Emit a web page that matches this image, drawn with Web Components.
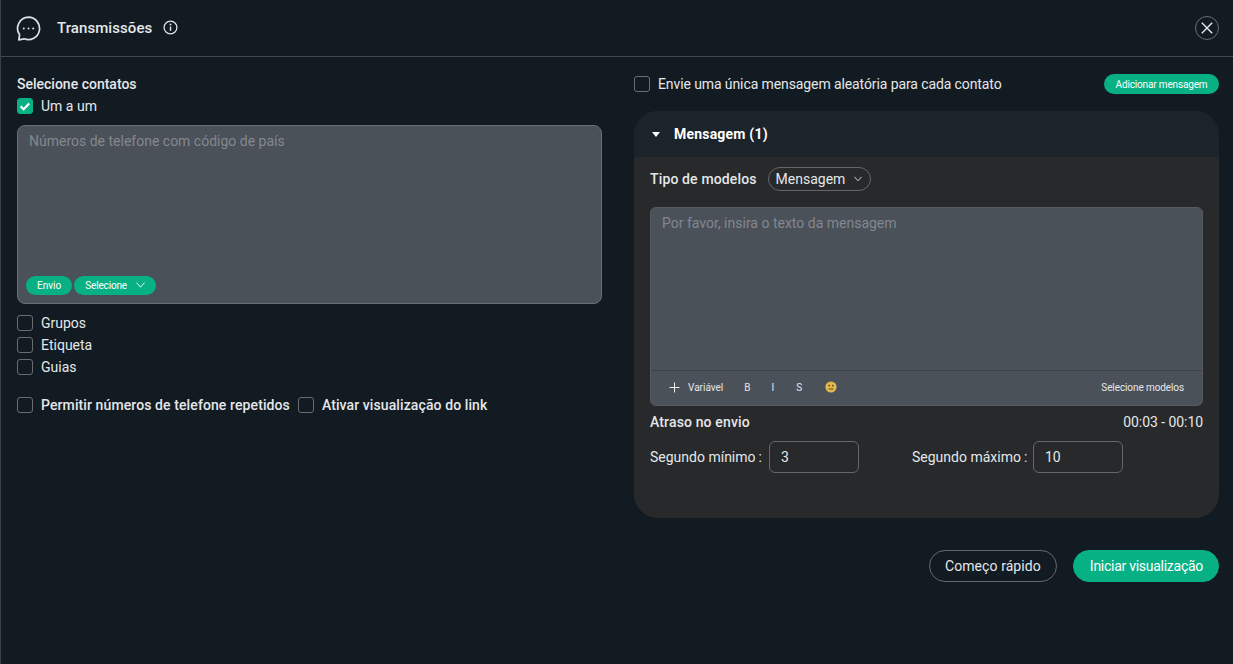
<!DOCTYPE html>
<html lang="pt">
<head>
<meta charset="utf-8">
<title>Transmissões</title>
<style>
    html, body { margin: 0; height: 100%; background: #131b22; }
    body { font-family: Roboto, "Liberation Sans", sans-serif; color: #e8eaed; overflow: hidden; }
</style>
</head>
<body>
<broadcast-page>
    <page-header title="Transmissões"></page-header>
    <div slot="left">
        <section-title>Selecione contatos</section-title>
        <check-box checked>Um a um</check-box>
        <text-box style="height:179px;margin-top:8px;" placeholder="Números de telefone com código de país">
            <div slot="footer" style="display:flex;gap:2px;padding:0 0 8px 8px;">
                <pill-button style="letter-spacing:0;">Envio</pill-button>
                <pill-button caret>Selecione</pill-button>
            </div>
        </text-box>
        <div style="margin-top:8px;display:flex;flex-direction:column;">
            <check-box>Grupos</check-box>
            <check-box>Etiqueta</check-box>
            <check-box>Guias</check-box>
        </div>
        <div style="margin-top:16px;display:flex;gap:8px;">
            <check-box bold>Permitir números de telefone repetidos</check-box>
            <check-box bold>Ativar visualização do link</check-box>
        </div>
    </div>
    <div slot="right">
        <div style="display:flex;justify-content:space-between;align-items:center;height:22px;margin-bottom:16px;">
            <check-box style="letter-spacing:-.1px;">Envie uma única mensagem aleatória para cada contato</check-box>
            <pill-button wide>Adicionar mensagem</pill-button>
        </div>
        <message-card heading="Mensagem (1)"></message-card>
    </div>
    <div slot="actions" style="display:flex;gap:16px;">
        <action-button style="padding:0 15px;letter-spacing:.08px;">Começo rápido</action-button>
        <action-button primary style="padding:0 15px 0 16px;letter-spacing:-.27px;">Iniciar visualização</action-button>
    </div>
</broadcast-page>

<script>
(function() {
    "use strict";

    class BroadcastPage extends HTMLElement {
        constructor() {
            super();
            this.attachShadow({mode: 'open'}).innerHTML = `
                <style>
                    :host { display: block; height: 664px; box-sizing: border-box; border-left: 1px solid #3a4046; }
                    #cols { display: grid; grid-template-columns: 585px 585px; gap: 32px; padding: 16px 0 0 16px; }
                    #actions { display: flex; justify-content: flex-end; margin: 32px 14px 0 0; }
                </style>
                <slot></slot>
                <div id="cols">
                    <div><slot name="left"></slot></div>
                    <div><slot name="right"></slot></div>
                </div>
                <div id="actions"><slot name="actions"></slot></div>
            `;
        }
    }

    class PageHeader extends HTMLElement {
        constructor() {
            super();
            this.attachShadow({mode: 'open'}).innerHTML = `
                <style>
                    :host { display: flex; align-items: center; height: 56px; border-bottom: 1px solid #45474a; padding: 0 14px 0 15px; }
                    h1 { margin: 0 0 0 16px; font-size: 15px; font-weight: 500; letter-spacing: .08px; color: #e4e7ea; line-height: 56px; }
                    .info { margin: 0 0 2px 11px; display: block; }
                    .close { margin-left: auto; display: block; }
                    .chat { display: block; }
                </style>
                <svg class="chat" width="25" height="25" viewBox="0 0 25 25" fill="none" stroke="#dfe2e5" stroke-width="1.7">
                    <path d="M12.5 1.2a11.2 11.2 0 1 1-4.3 21.6l-5.4 1 .8-5A11.2 11.2 0 0 1 12.5 1.2z" stroke-linejoin="round"/>
                    <circle cx="7.8" cy="12.5" r="1" fill="#dfe2e5" stroke="none"/>
                    <circle cx="12.5" cy="12.5" r="1" fill="#dfe2e5" stroke="none"/>
                    <circle cx="17.2" cy="12.5" r="1" fill="#dfe2e5" stroke="none"/>
                </svg>
                <h1>${this.getAttribute('title')}</h1>
                <svg class="info" width="15" height="15" viewBox="0 0 15 15" fill="none" stroke="#e4e7ea" stroke-width="1.2">
                    <circle cx="7.5" cy="7.5" r="6.4"/>
                    <path d="M7.5 6.6v4.2" stroke-width="1.4"/>
                    <circle cx="7.5" cy="4.5" r=".9" fill="#e4e7ea" stroke="none"/>
                </svg>
                <svg class="close" width="24" height="24" viewBox="0 0 24 24" fill="none">
                    <circle cx="12" cy="12" r="11.5" stroke="#6b6e70"/>
                    <path d="M6.8 6.8l10.4 10.4M17.2 6.8L6.8 17.2" stroke="#e6e8ea" stroke-width="1.4"/>
                </svg>
            `;
        }
    }

    class SectionTitle extends HTMLElement {
        constructor() {
            super();
            this.attachShadow({mode: 'open'}).innerHTML = `
                <style>
                    :host { display: block; font-size: 14px; font-weight: 500; line-height: 22px; color: #e4e7ea; }
                </style>
                <slot></slot>
            `;
        }
    }

    class CheckBox extends HTMLElement {
        constructor() {
            super();
            let on = this.hasAttribute('checked');
            this.attachShadow({mode: 'open'}).innerHTML = `
                <style>
                    :host { display: flex; align-items: center; gap: 8px; height: 22px; font-size: 14px; color: #e4e7ea; white-space: nowrap; }
                    :host([bold]) { font-weight: 500; letter-spacing: .1px; }
                    .box { width: 14px; height: 14px; border: 1px solid #6a6d70; border-radius: 3px; display: block; flex: none; }
                    .box.on { background: #07b184; border-color: #07b184; }
                    svg { display: block; }
                </style>
                <span class="box ${on ? 'on' : ''}">
                    ${on ? '<svg width="14" height="14" viewBox="0 0 14 14" fill="none"><path d="M2.6 7.2l3 3L11.2 4.4" stroke="#fff" stroke-width="2.2"/></svg>' : ''}
                </span>
                <span><slot></slot></span>
            `;
        }
    }

    class TextBox extends HTMLElement {
        constructor() {
            super();
            this.attachShadow({mode: 'open'}).innerHTML = `
                <style>
                    :host { display: flex; flex-direction: column; box-sizing: border-box; background: #4a5159; border: 1px solid #6b7076; border-radius: 8px; }
                    #ph { flex: 1; padding: 5px 11px; font-size: 14px; line-height: 20px; color: #83888e; }
                </style>
                <div id="ph">${this.getAttribute('placeholder')}</div>
                <slot name="footer"></slot>
            `;
        }
    }

    class PillButton extends HTMLElement {
        constructor() {
            super();
            let caret = this.hasAttribute('caret');
            this.attachShadow({mode: 'open'}).innerHTML = `
                <style>
                    :host { display: inline-flex; align-items: center; height: 19px; padding: 0 11px; gap: 9px; border-radius: 10px; background: #07b184; color: #fff; font-size: 10px; letter-spacing: -.15px; white-space: nowrap; }
                    :host([wide]) { height: 20px; padding: 0 11.5px; }
                    svg { display: block; margin-bottom: 2px; }
                </style>
                <slot></slot>
                ${caret ? '<svg width="9" height="6" viewBox="0 0 9 6" fill="none"><path d="M.5.6L4.5 5.2 8.5.6" stroke="#e8f8f3"/></svg>' : ''}
            `;
        }
    }

    class MessageCard extends HTMLElement {
        constructor() {
            super();
            this.attachShadow({mode: 'open'}).innerHTML = `
                <style>
                    :host { display: block; height: 407px; border-radius: 24px; overflow: hidden; background: #27292b; }
                    #head { display: flex; align-items: center; height: 46px; background: #1c242b; padding-left: 18px; font-size: 14px; font-weight: 700; letter-spacing: .2px; color: #fff; }
                    #head svg { margin-right: 14px; display: block; }
                    #body { padding: 10px 16px 0; }
                    #type { display: flex; align-items: center; gap: 11px; height: 24px; font-size: 14px; font-weight: 500; color: #e4e7ea; }
                    #type b { font-weight: 500; letter-spacing: .14px; }
                    #select { display: inline-flex; align-items: center; gap: 9px; height: 22px; padding: 0 8px 0 7px; border: 1px solid #65686a; border-radius: 12px; font-weight: 400; }
                    #editor { margin-top: 16px; height: 199px; box-sizing: border-box; background: #4a5159; border: 1px solid #565b61; border-radius: 6px; display: flex; flex-direction: column; }
                    #ph { flex: 1; padding: 5px 11px; font-size: 14px; line-height: 20px; color: #83888e; }
                    #tools { display: flex; align-items: center; height: 35px; box-sizing: border-box; padding: 0 18px 2px; border-top: 1px solid #3f4245; font-size: 10px; color: #e4e7ea; }
                    #tools svg { display: block; }
                    #tools .v { margin: 0 21px 0 8px; }
                    #tools .t { margin-right: 21px; }
                    #tools .s { margin: 0 23px 0 1px; }
                    #tools .end { margin-left: auto; letter-spacing: -.1px; }
                    #delay { display: flex; justify-content: space-between; margin-top: 5px; line-height: 22px; font-size: 14px; color: #e4e7ea; }
                    #delay b { font-weight: 500; letter-spacing: .14px; }
                    #delay span { letter-spacing: -.06px; }
                    #range { display: flex; align-items: center; margin-top: 8px; font-size: 14px; color: #e4e7ea; }
                    .lab { display: inline-block; width: 119px; white-space: nowrap; }
                    .lab i { font-style: normal; margin-left: 3px; }
                    .num { box-sizing: border-box; height: 32px; border: 1px solid #65686a; border-radius: 6px; padding: 0 11px; line-height: 30px; }
                    .a { width: 90px; margin-right: 53px; }
                    .b { width: 90px; margin-left: 2px; }
                </style>
                <div id="head">
                    <svg width="8" height="5" viewBox="0 0 8 5"><path d="M0 0h8L4 5z" fill="#fff"/></svg>
                    ${this.getAttribute('heading')}
                </div>
                <div id="body">
                    <div id="type"><b>Tipo de modelos</b>
                        <span id="select">Mensagem
                            <svg width="8" height="6" viewBox="0 0 8 6" fill="none"><path d="M.4.8L4 4.8 7.6.8" stroke="#c9cccf"/></svg>
                        </span>
                    </div>
                    <div id="editor">
                        <div id="ph">Por favor, insira o texto da mensagem</div>
                        <div id="tools">
                            <svg width="11" height="11" viewBox="0 0 11 11" fill="none"><path d="M5.5.5v10M.5 5.5h10" stroke="#eee"/></svg>
                            <span class="v">Variável</span>
                            <span class="t">B</span>
                            <span class="t">I</span>
                            <span class="s">S</span>
                            <svg width="12" height="12" viewBox="0 0 12 12" fill="none">
                                <circle cx="6" cy="6" r="5.6" fill="#e5b84f"/>
                                <circle cx="4.2" cy="4.6" r=".85" fill="#4a3c1c"/>
                                <circle cx="7.8" cy="4.6" r=".85" fill="#4a3c1c"/>
                                <path d="M3.6 8h4.8" stroke="#4a3c1c" stroke-width=".9"/>
                            </svg>
                            <span class="end">Selecione modelos</span>
                        </div>
                    </div>
                    <div id="delay"><b>Atraso no envio</b><span>00:03 - 00:10</span></div>
                    <div id="range">
                        <span class="lab">Segundo mínimo<i>:</i></span><span class="num a">3</span>
                        <span class="lab">Segundo máximo<i>:</i></span><span class="num b">10</span>
                    </div>
                </div>
            `;
        }
    }

    class ActionButton extends HTMLElement {
        constructor() {
            super();
            this.attachShadow({mode: 'open'}).innerHTML = `
                <style>
                    :host { display: inline-flex; align-items: center; box-sizing: border-box; height: 32px; padding: 0 16px; border-radius: 16px; border: 1px solid #65686a; font-size: 14px; color: #e4e7ea; white-space: nowrap; }
                    :host([primary]) { background: #07b184; border-color: #07b184; color: #fff; }
                </style>
                <slot></slot>
            `;
        }
    }

    window.customElements.define('broadcast-page', BroadcastPage);
    window.customElements.define('page-header', PageHeader);
    window.customElements.define('section-title', SectionTitle);
    window.customElements.define('check-box', CheckBox);
    window.customElements.define('text-box', TextBox);
    window.customElements.define('pill-button', PillButton);
    window.customElements.define('message-card', MessageCard);
    window.customElements.define('action-button', ActionButton);
})();
</script>
</body>
</html>
